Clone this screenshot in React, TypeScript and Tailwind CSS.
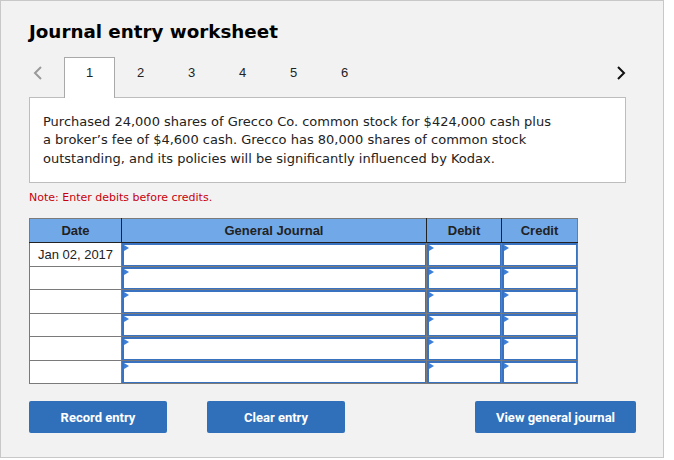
import React from 'react';

const verdana = { fontFamily: '"DejaVu Sans", Verdana, sans-serif' };
const arial = { fontFamily: '"Liberation Sans", Arial, sans-serif' };
const narrow = { fontFamily: '"Liberation Sans Narrow", Roboto, "Liberation Sans", sans-serif' };

const rows = ['Jan 02, 2017', '', '', '', '', ''];

function EntryCell() {
  return (
    <td className="border border-[#7a7a7a] p-0 align-top">
      <div className="relative h-[22.5px] border-t-2 border-l-2 border-r border-b border-[#3a72c2] bg-white">
        <span className="absolute left-0 top-0 h-0 w-0 border-y-[3px] border-y-transparent border-l-[5px] border-l-[#3d7fd8]" />
      </div>
    </td>
  );
}

export default function App() {
  return (
    <div className="min-h-screen bg-white">
      <div className="h-[458px] w-[664px] border border-[#c8c8c8] bg-[#f2f2f2] px-[28px] pt-[20px]">
        <h1 className="text-[18.3px] font-bold leading-[22px] text-black" style={verdana}>
          Journal entry worksheet
        </h1>

        <div className="relative z-10 mt-[14px] -mb-px flex h-[41px] w-[597px]" style={arial}>
          <div className="flex w-[35px] items-start pl-[4px] pt-[9px]">
            <svg width="10" height="14" viewBox="0 0 10 14" fill="none">
              <polyline points="8,1 2,7 8,13" stroke="#9a9a9a" strokeWidth="2" />
            </svg>
          </div>
          {[1, 2, 3, 4, 5, 6].map((n) => (
            <div
              key={n}
              className={
                n === 1
                  ? 'w-[51px] border border-b-0 border-[#a9a9a9] bg-white pt-[7px] text-center text-[13px] leading-[16px] text-[#222]'
                  : 'w-[51px] pt-[8px] text-center text-[13px] leading-[16px] text-[#222]'
              }
            >
              {n}
            </div>
          ))}
          <div className="flex-1" />
          <div className="pt-[9px]">
            <svg width="10" height="14" viewBox="0 0 10 14" fill="none">
              <polyline points="2,1 8,7 2,13" stroke="#111" strokeWidth="2" />
            </svg>
          </div>
        </div>

        <div
          className="h-[86px] w-[597px] border border-[#bdbdbd] bg-white px-[13px] pt-[15px] text-[13px] leading-[18.4px] text-[#222]"
          style={verdana}
        >
          Purchased 24,000 shares of Grecco Co. common stock for $424,000 cash plus
          <br />
          a broker’s fee of $4,600 cash. Grecco has 80,000 shares of common stock
          <br />
          outstanding, and its policies will be significantly influenced by Kodax.
        </div>

        <p className="mt-[7px] text-[11px] leading-[16px] text-[#c8000a]" style={verdana}>
          Note: Enter debits before credits.
        </p>

        <table className="mt-[12px] w-[548px] table-fixed border-collapse" style={arial}>
          <colgroup>
            <col className="w-[92px]" />
            <col className="w-[305px]" />
            <col className="w-[75px]" />
            <col className="w-[76px]" />
          </colgroup>
          <thead>
            <tr className="h-[24px] bg-[#70a8e8] text-[13px] font-bold text-[#222]">
              <th className="border-t border-l border-t-[#7a7a7a] border-l-[#7a7a7a] border-b border-b-[#222] border-r border-r-[#222]">Date</th>
              <th className="border-t border-t-[#7a7a7a] border-b border-b-[#222] border-r border-r-[#222]">General Journal</th>
              <th className="border-t border-t-[#7a7a7a] border-b border-b-[#222] border-r border-r-[#222]">Debit</th>
              <th className="border-t border-t-[#7a7a7a] border-b border-b-[#222] border-r border-r-[#7a7a7a]">Credit</th>
            </tr>
          </thead>
          <tbody>
            {rows.map((d, i) => (
              <tr key={i} className="h-[23.5px]">
                <td className="border border-[#7a7a7a] bg-white p-0 text-center text-[13px] text-[#222]">{d}</td>
                <EntryCell />
                <EntryCell />
                <EntryCell />
              </tr>
            ))}
          </tbody>
        </table>

        <div className="mt-[17px] flex w-[607px] items-start" style={narrow}>
          <button className="h-[32px] w-[138px] rounded-[2px] bg-[#3070bb] pt-px text-[13px] font-bold text-white">
            Record entry
          </button>
          <button className="ml-[40px] h-[32px] w-[138px] rounded-[2px] bg-[#3070bb] pt-px text-[13px] font-bold text-white">
            Clear entry
          </button>
          <div className="flex-1" />
          <button className="h-[32px] w-[161px] rounded-[2px] bg-[#3070bb] pt-px text-[13px] font-bold text-white">
            View general journal
          </button>
        </div>
      </div>
    </div>
  );
}
